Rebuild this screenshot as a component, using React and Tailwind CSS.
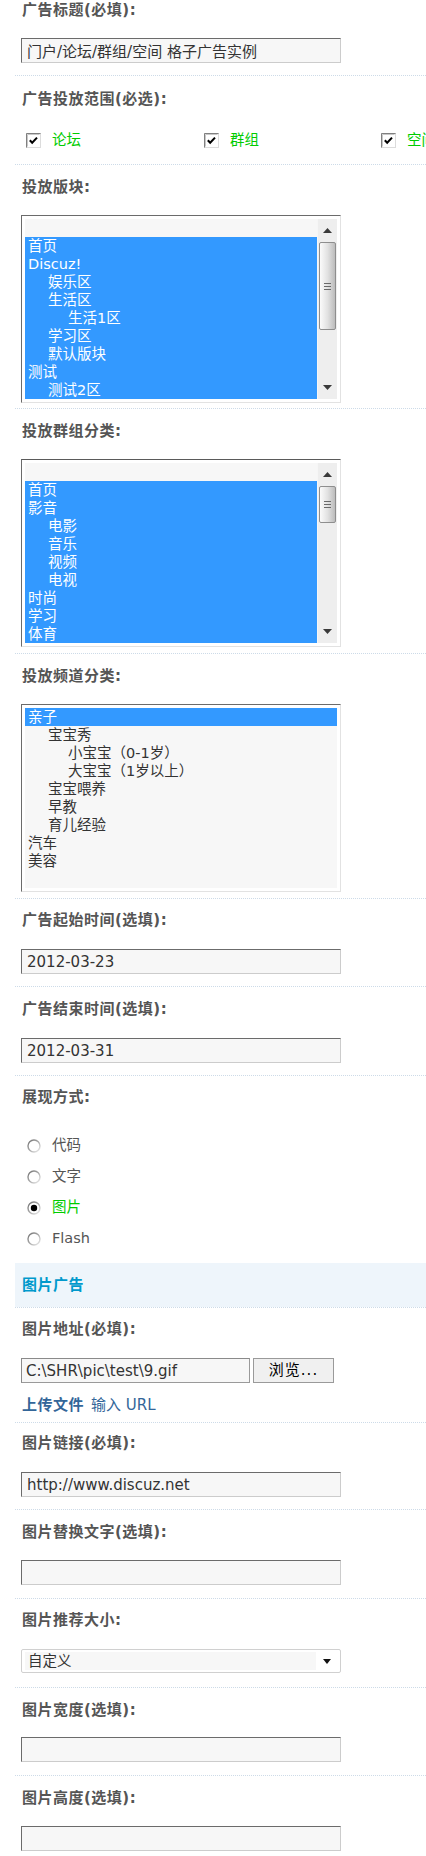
import React from "react";

function Label({ children, className = "" }) {
  return (
    <div className={`h-[14px] leading-[14px] text-[15px] font-bold text-[#555] tracking-[0.5px] pl-[1px] whitespace-nowrap ${className}`}>
      {children}
    </div>
  );
}

function Section({ top = true, className = "", children }) {
  return (
    <div className={`${top ? "border-t border-dotted border-[#cddbe8]" : ""} pl-[6px] ${className}`}>
      {children}
    </div>
  );
}

function TextInput({ value = "", className = "" }) {
  return (
    <input
      readOnly
      value={value}
      className={`block w-[320px] h-[25px] bg-[#f7f7f7] border border-t-[#6b6b6b] border-l-[#6b6b6b] border-r-[#cccccc] border-b-[#cccccc] pl-[5px] text-[15px] text-[#333] outline-none ${className}`}
    />
  );
}

function CheckBox() {
  return (
    <svg width="15" height="15" viewBox="0 0 15 15" className="shrink-0">
      <rect x="0.5" y="0.5" width="14" height="14" fill="#fff" stroke="#dcdcdc" />
      <path d="M0.5 14.5 V0.5 H14.5" stroke="#808080" fill="none" />
      <path d="M1.5 13.5 V1.5 H13.5" stroke="#c8c8c8" fill="none" />
      <path d="M3.8 7.2 L6.2 9.8 L11 4.6" stroke="#000" strokeWidth="2" fill="none" />
    </svg>
  );
}

function Radio({ checked }) {
  return (
    <svg width="14" height="14" viewBox="0 0 14 14" className="shrink-0">
      <defs>
        <linearGradient id="rg" x1="0" y1="0" x2="1" y2="1">
          <stop offset="0" stopColor="#707070" />
          <stop offset="0.55" stopColor="#b0b0b0" />
          <stop offset="1" stopColor="#f0f0f0" />
        </linearGradient>
      </defs>
      <circle cx="7" cy="7" r="6" fill="#fff" stroke="url(#rg)" strokeWidth="1.4" />
      {checked && <circle cx="7" cy="7" r="3.2" fill="#000" />}
    </svg>
  );
}

function Arrow({ up }) {
  return (
    <svg width="9" height="5" viewBox="0 0 9 5">
      {up ? <polygon points="0,5 4.5,0 9,5" fill="#3a3a3a" /> : <polygon points="0,0 9,0 4.5,5" fill="#3a3a3a" />}
    </svg>
  );
}

function ScrollBar({ thumbClass }) {
  return (
    <div className="w-[20px] shrink-0 bg-[#eeeeee] border-l border-[#f6f6f6] flex flex-col">
      <div className="h-[23px] flex items-center justify-center">
        <Arrow up />
      </div>
      <div className={`mx-[1px] ${thumbClass} rounded-[2px] border border-[#8e8e8e] bg-gradient-to-r from-[#fbfbfb] via-[#e2e2e2] to-[#bcbcbc] flex flex-col items-center justify-center gap-[2px]`}>
        <div className="w-[7px] h-[1px] bg-[#6a6a6a]" />
        <div className="w-[7px] h-[1px] bg-[#6a6a6a]" />
        <div className="w-[7px] h-[1px] bg-[#6a6a6a]" />
      </div>
      <div className="flex-1" />
      <div className="h-[24px] flex items-center justify-center">
        <Arrow />
      </div>
    </div>
  );
}

const levelPad = ["pl-[3px]", "pl-[23px]", "pl-[43px]"];

function ListBox({ items, thumbClass, topClass = "border-t-[#6b6b6b]" }) {
  return (
    <div className={`w-[320px] h-[188px] bg-white border border-l-[#6b6b6b] ${topClass} border-r-[#e2e2e2] border-b-[#e2e2e2] p-[3px] flex`}>
      <div className="flex-1 bg-[#f7f7f7] overflow-hidden">
        {items.map(([lvl, text, sel], i) => (
          <div
            key={i}
            className={`h-[18px] leading-[18px] text-[14.5px] whitespace-nowrap ${levelPad[lvl]} ${sel ? "bg-[#3399ff] text-white" : "text-[#333]"}`}
          >
            {text}
          </div>
        ))}
      </div>
      {thumbClass && <ScrollBar thumbClass={thumbClass} />}
    </div>
  );
}

const forums = [
  [0, "", false],
  [0, "首页", true],
  [0, "Discuz!", true],
  [1, "娱乐区", true],
  [1, "生活区", true],
  [2, "生活1区", true],
  [1, "学习区", true],
  [1, "默认版块", true],
  [0, "测试", true],
  [1, "测试2区", true],
];

const groups = [
  [0, "", false],
  [0, "首页", true],
  [0, "影音", true],
  [1, "电影", true],
  [1, "音乐", true],
  [1, "视频", true],
  [1, "电视", true],
  [0, "时尚", true],
  [0, "学习", true],
  [0, "体育", true],
];

const channels = [
  [0, "亲子", true],
  [1, "宝宝秀", false],
  [2, "小宝宝（0-1岁）", false],
  [2, "大宝宝（1岁以上）", false],
  [1, "宝宝喂养", false],
  [1, "早教", false],
  [1, "育儿经验", false],
  [0, "汽车", false],
  [0, "美容", false],
];

export default function App() {
  return (
    <div className="w-[426px] min-h-[1856px] bg-white overflow-hidden pl-[15px] font-['DejaVu_Sans','Noto_Sans_CJK_SC',sans-serif]">
      <Section top={false} className="pt-[3px] pb-[12px]">
        <Label>广告标题(必填):</Label>
        <TextInput className="mt-[21px]" value="门户/论坛/群组/空间 格子广告实例" />
      </Section>

      <Section className="pt-[16px] pb-[17px]">
        <Label>广告投放范围(必选):</Label>
        <div className="mt-[27px] h-[14px] flex items-center pl-[5px] whitespace-nowrap">
          <div className="w-[178px] shrink-0 flex items-center">
            <CheckBox />
            <span className="ml-[11px] text-[14.5px] leading-[14px] text-[#00cc00]">论坛</span>
          </div>
          <div className="w-[177px] shrink-0 flex items-center">
            <CheckBox />
            <span className="ml-[11px] text-[14.5px] leading-[14px] text-[#00cc00]">群组</span>
          </div>
          <div className="shrink-0 flex items-center">
            <CheckBox />
            <span className="ml-[11px] text-[14.5px] leading-[14px] text-[#00cc00]">空间</span>
          </div>
        </div>
      </Section>

      <Section className="pt-[15px] pb-[5px]">
        <Label>投放版块:</Label>
        <div className="mt-[21px]">
          <ListBox items={forums} thumbClass="h-[88px]" />
        </div>
      </Section>

      <Section className="pt-[15px] pb-[6px]">
        <Label>投放群组分类:</Label>
        <div className="mt-[21px]">
          <ListBox items={groups} thumbClass="h-[37px]" topClass="border-t-[#5a5a5a]" />
        </div>
      </Section>

      <Section className="pt-[15px] pb-[6px]">
        <Label>投放频道分类:</Label>
        <div className="mt-[21px]">
          <ListBox items={channels} />
        </div>
      </Section>

      <Section className="pt-[14px] pb-[12px]">
        <Label>广告起始时间(选填):</Label>
        <TextInput className="mt-[22px]" value="2012-03-23" />
      </Section>

      <Section className="pt-[15px] pb-[12px]">
        <Label>广告结束时间(选填):</Label>
        <TextInput className="mt-[22px]" value="2012-03-31" />
      </Section>

      <Section className="pt-[14px] pb-[9px]">
        <Label>展现方式:</Label>
        <div className="mt-[26px] pl-[6px]">
          <div className="h-[31px] flex items-center">
            <Radio />
            <span className="ml-[11px] text-[14.5px] text-[#555]">代码</span>
          </div>
          <div className="h-[31px] flex items-center">
            <Radio />
            <span className="ml-[11px] text-[14.5px] text-[#555]">文字</span>
          </div>
          <div className="h-[31px] flex items-center">
            <Radio checked />
            <span className="ml-[11px] text-[14.5px] text-[#00cc00]">图片</span>
          </div>
          <div className="h-[31px] flex items-center">
            <Radio />
            <span className="ml-[11px] text-[14.5px] text-[#555]">Flash</span>
          </div>
        </div>
      </Section>

      <div className="h-[44px] bg-[#eef5fb] flex items-center pl-[7px] text-[15px] font-bold text-[#0099cc] tracking-[0.5px]">
        图片广告
      </div>

      <Section className="pt-[14px] pb-[8px]">
        <Label>图片地址(必填):</Label>
        <div className="mt-[22px] flex gap-[3px]">
          <input
            readOnly
            value="C:\SHR\pic\test\9.gif"
            className="block w-[229px] h-[25px] bg-[#f7f7f7] border border-[#9a9a9a] border-t-[#8a8a8a] border-l-[#8a8a8a] pl-[4px] text-[15px] text-[#333] outline-none"
          />
          <button className="w-[81px] h-[25px] bg-[#f0f0f0] border border-[#9a9a9a] text-[15px] text-black tracking-[1px]">
            浏览...
          </button>
        </div>
        <div className="mt-[13px] h-[18px] flex items-center text-[15px] text-[#336699] pl-[1px] whitespace-nowrap">
          <span className="font-bold tracking-[0.5px]">上传文件</span>
          <span className="ml-[7px]">输入 URL</span>
        </div>
      </Section>

      <Section className="pt-[13px] pb-[12px]">
        <Label>图片链接(必填):</Label>
        <TextInput className="mt-[22px]" value="http://www.discuz.net" />
      </Section>

      <Section className="pt-[15px] pb-[13px]">
        <Label>图片替换文字(选填):</Label>
        <TextInput className="mt-[21px]" />
      </Section>

      <Section className="pt-[14px] pb-[14px]">
        <Label>图片推荐大小:</Label>
        <div className="mt-[22px] w-[320px] h-[24px] bg-white border border-[#d0d0d0] rounded-[2px] px-[3px] pt-[2px] flex">
          <div className="w-[291px] h-[18px] bg-[#f7f7f7] leading-[18px] text-[14.5px] text-[#333] pl-[3px]">
            自定义
          </div>
          <div className="flex-1 flex items-center justify-center pb-[2px]">
            <svg width="8" height="5" viewBox="0 0 8 5">
              <polygon points="0,0 8,0 4,5" fill="#111" />
            </svg>
          </div>
        </div>
      </Section>

      <Section className="pt-[15px] pb-[13px]">
        <Label>图片宽度(选填):</Label>
        <TextInput className="mt-[20px]" />
      </Section>

      <Section className="pt-[15px] pb-[12px]">
        <Label>图片高度(选填):</Label>
        <TextInput className="mt-[21px]" />
      </Section>
    </div>
  );
}
